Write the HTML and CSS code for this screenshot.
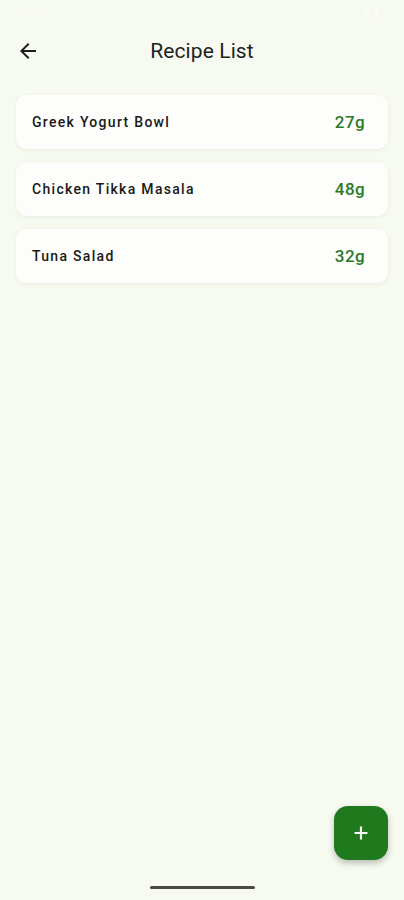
FILE: index.html
```html
<!DOCTYPE html>
<html lang="en">
<head>
    <meta charset="UTF-8">
    <meta name="viewport" content="width=device-width, initial-scale=1.0">
    <title>Recipe List</title>
    <link rel="stylesheet" href="styles.css">
</head>
<body>
    <div class="screen">
        <div class="status-bar">
            <span class="status-time">12:00</span>
            <span class="status-icons">&#9662; &#9646;</span>
        </div>

        <div class="app-bar">
            <button class="back-button" aria-label="Back">
                <svg width="24" height="24" viewBox="0 0 24 24">
                    <path d="M20 11H7.83l5.59-5.59L12 4l-8 8 8 8 1.41-1.41L7.83 13H20v-2z" fill="#1d1d1d"/>
                </svg>
            </button>
            <div class="app-title">Recipe List</div>
            <div class="app-bar-spacer"></div>
        </div>

        <div class="recipe-list">
            <div class="recipe-card">
                <span class="recipe-name">Greek Yogurt Bowl</span>
                <span class="recipe-protein">27g</span>
            </div>
            <div class="recipe-card">
                <span class="recipe-name">Chicken Tikka Masala</span>
                <span class="recipe-protein">48g</span>
            </div>
            <div class="recipe-card">
                <span class="recipe-name">Tuna Salad</span>
                <span class="recipe-protein">32g</span>
            </div>
        </div>

        <div class="bottom-area">
            <button class="fab" aria-label="Add recipe">
                <svg width="22" height="22" viewBox="0 0 24 24">
                    <path d="M19 13.2h-5.8V19h-2.4v-5.8H5v-2.4h5.8V5h2.4v5.8H19v2.4z" fill="#ffffff"/>
                </svg>
            </button>
            <div class="home-indicator"></div>
        </div>
    </div>
</body>
</html>
```

FILE: styles.css
```css
body {
    margin: 0;
    padding: 0;
    font-family: Roboto, "Noto Sans", Arial, sans-serif;
    background-color: #f7faf0;
    color: #1d1d1d;
}
.screen {
    width: 404px;
    height: 900px;
    display: flex;
    flex-direction: column;
    box-sizing: border-box;
}
.status-bar {
    height: 26px;
    display: flex;
    justify-content: space-between;
    align-items: center;
    padding: 0 24px 0 14px;
    color: #ffffff;
    font-size: 12px;
    opacity: 0.6;
}
.app-bar {
    height: 50px;
    display: flex;
    align-items: center;
    padding: 0 4px;
}
.back-button {
    width: 48px;
    height: 48px;
    border: none;
    background: none;
    padding: 0;
    display: flex;
    align-items: center;
    justify-content: center;
    cursor: pointer;
}
.app-title {
    flex: 1;
    text-align: center;
    font-size: 21px;
    font-weight: 400;
    color: #222;
    letter-spacing: 0.1px;
}
.app-bar-spacer {
    width: 48px;
}
.recipe-list {
    display: flex;
    flex-direction: column;
    gap: 13px;
    padding: 19px 16px 0 16px;
}
.recipe-card {
    height: 54px;
    background-color: #fdfefb;
    border-radius: 11px;
    box-shadow: 0 1px 4px rgba(60, 80, 40, 0.08);
    display: flex;
    align-items: center;
    justify-content: space-between;
    padding: 0 23px 0 16px;
}
.recipe-name {
    font-size: 14px;
    font-weight: 500;
    letter-spacing: 1.3px;
    color: #1a1a1a;
}
.recipe-protein {
    font-size: 17px;
    font-weight: 500;
    letter-spacing: 0.4px;
    color: #2a7a2a;
}
.bottom-area {
    flex: 1;
    display: flex;
    flex-direction: column;
    align-items: flex-end;
    justify-content: flex-end;
}
.fab {
    width: 54px;
    height: 54px;
    margin-right: 16px;
    border: none;
    border-radius: 14px;
    background-color: #1e7a1c;
    box-shadow: 0 3px 6px rgba(0, 0, 0, 0.25);
    display: flex;
    align-items: center;
    justify-content: center;
    cursor: pointer;
}
.home-indicator {
    align-self: center;
    width: 105px;
    height: 3px;
    border-radius: 2px;
    background-color: #4a4a48;
    margin: 26px 0 11px 0;
}
```
